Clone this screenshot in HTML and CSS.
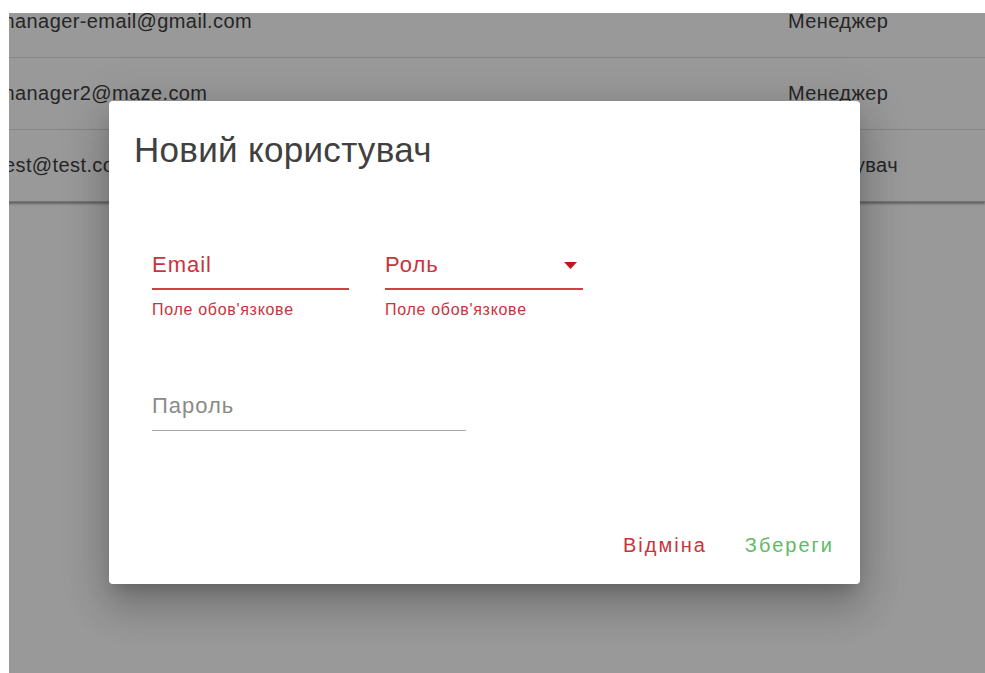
FILE: index.html
```html
<!DOCTYPE html>
<html lang="uk">
<head>
<meta charset="utf-8">
<title>Користувачі</title>
<link rel="stylesheet" href="styles.css">
</head>
<body>
<div class="viewport">
  <div class="users">
    <div class="user-row">
      <span class="cell-email">manager-email@gmail.com</span>
      <span class="cell-role">Менеджер</span>
    </div>
    <div class="user-row">
      <span class="cell-email">manager2@maze.com</span>
      <span class="cell-role">Менеджер</span>
    </div>
    <div class="user-row user-row-last">
      <span class="cell-email">test@test.com</span>
      <span class="cell-role">Користувач</span>
    </div>
  </div>

  <div class="backdrop"></div>

  <div class="dialog">
    <h2 class="dialog-title">Новий користувач</h2>
    <form class="dialog-form">
      <div class="form-row">
        <div class="field">
          <div class="field-line field-line-error">
            <span class="field-label">Email</span>
          </div>
          <div class="field-error">Поле обов'язкове</div>
        </div>
        <div class="field">
          <div class="field-line field-line-error">
            <span class="field-label">Роль</span>
            <svg class="select-arrow" width="13" height="7" viewBox="0 0 13 7"><path d="M0 0H13L6.5 7Z"/></svg>
          </div>
          <div class="field-error">Поле обов'язкове</div>
        </div>
      </div>
      <div class="form-row form-row-password">
        <div class="field field-wide">
          <div class="field-line">
            <span class="field-label field-label-muted">Пароль</span>
          </div>
        </div>
      </div>
    </form>
    <div class="dialog-actions">
      <button class="btn btn-cancel" type="button">Відміна</button>
      <button class="btn btn-save" type="button">Збереги</button>
    </div>
  </div>
</div>
</body>
</html>
```

FILE: styles.css
```css
html, body {
  margin: 0;
  padding: 0;
  background: #ffffff;
}

body {
  font-family: "Liberation Sans", Arial, sans-serif;
  color: #333333;
}

.viewport {
  position: relative;
  margin: 13px 0 0 9px;
  height: 660px;
  overflow: hidden;
  background: #ffffff;
}

/* user table behind the dialog */
.users {
  margin: -27px 0 0 -11px;
  box-shadow: 0 2px 2px rgba(0, 0, 0, 0.35);
}

.user-row {
  display: grid;
  grid-template-columns: 790px 1fr;
  align-items: center;
  height: 71px;
  border-bottom: 1px solid #dedede;
  font-size: 20px;
  letter-spacing: 0.4px;
  color: #404040;
}

.user-row-last {
  border-bottom-color: #c4c4c4;
}

.backdrop {
  position: absolute;
  inset: 0;
  background: rgba(0, 0, 0, 0.4);
}

/* dialog */
.dialog {
  position: absolute;
  left: 100px;
  top: 88px;
  width: 751px;
  height: 483px;
  box-sizing: border-box;
  padding: 30px 26px 0 25px;
  background: #ffffff;
  border-radius: 4px;
  box-shadow:
    0 11px 15px -7px rgba(0, 0, 0, 0.2),
    0 24px 38px 3px rgba(0, 0, 0, 0.14),
    0 9px 46px 8px rgba(0, 0, 0, 0.12);
  display: flex;
  flex-direction: column;
}

.dialog-title {
  margin: 0;
  font-size: 35px;
  font-weight: normal;
  line-height: 38px;
  letter-spacing: 0.3px;
  color: #404040;
}

.dialog-form {
  margin: 84px 0 0 18px;
}

.form-row {
  display: flex;
  gap: 36px;
}

.form-row-password {
  margin-top: 75px;
}

.field {
  width: 197px;
}

.field + .field {
  width: 198px;
}

.field-wide {
  width: 314px;
}

.field-line {
  display: flex;
  align-items: center;
  justify-content: space-between;
  height: 24px;
  padding-bottom: 12px;
  border-bottom: 1px solid #a8a8a8;
}

.field-line-error {
  padding-bottom: 11px;
  border-bottom: 2px solid #cf3f45;
}

.field-label {
  font-size: 22px;
  line-height: 24px;
  letter-spacing: 1px;
  color: #c8343c;
}

.field-label-muted {
  color: #8a8a8a;
}

.select-arrow {
  margin-right: 6px;
  fill: #c4141c;
}

.field-error {
  margin-top: 11px;
  font-size: 16px;
  line-height: 18px;
  letter-spacing: 0.7px;
  color: #c8343c;
}

.dialog-actions {
  margin-top: auto;
  margin-bottom: 27px;
  display: flex;
  justify-content: flex-end;
  gap: 38px;
}

.btn {
  border: 0;
  padding: 0;
  background: none;
  font-family: "Liberation Sans", Arial, sans-serif;
  font-size: 20px;
  line-height: 24px;
  letter-spacing: 2px;
  cursor: pointer;
}

.btn-cancel {
  color: #c8343c;
}

.btn-save {
  color: #62b966;
}
```
